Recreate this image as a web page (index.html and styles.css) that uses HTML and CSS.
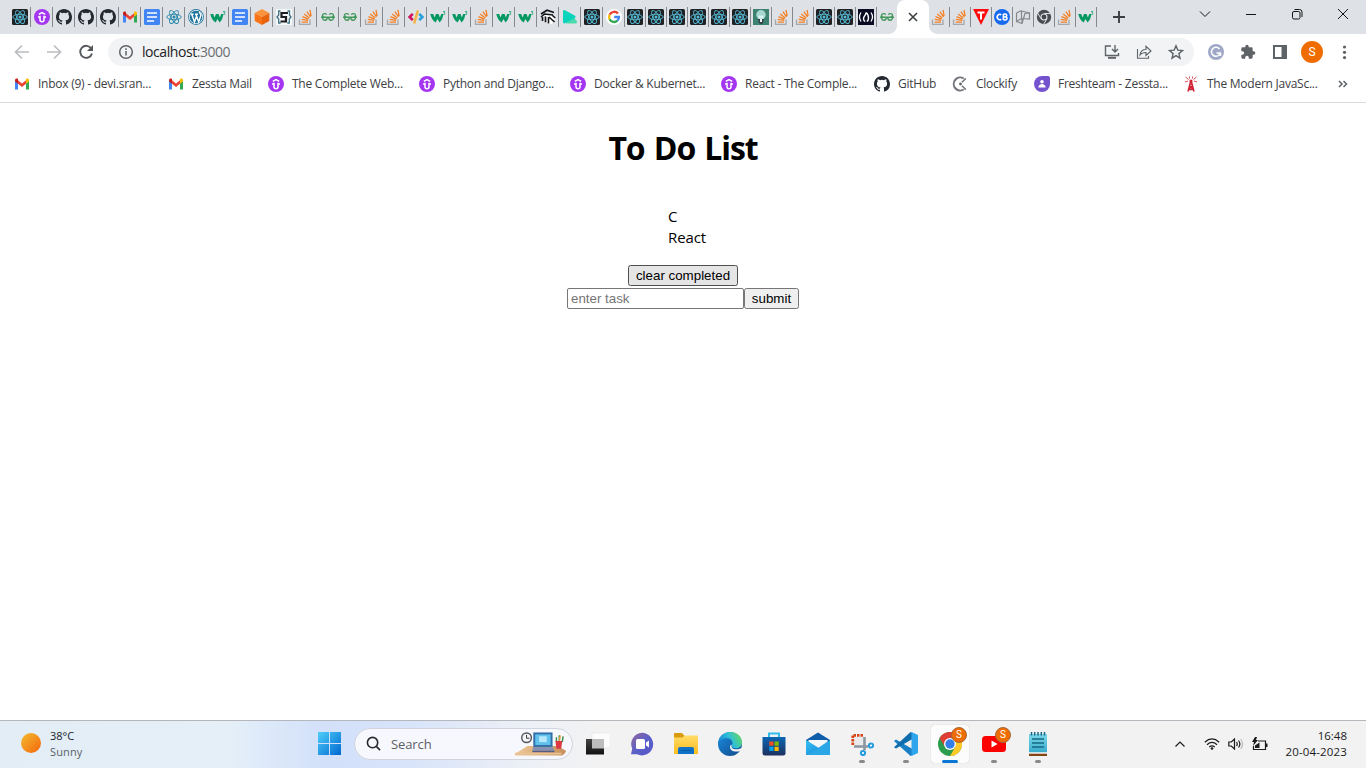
FILE: index.html
```html
<!DOCTYPE html>
<html lang="en">
<head>
<meta charset="utf-8">
<title>To Do List</title>
<link rel="stylesheet" href="styles.css">
</head>
<body>
<svg class="sprite" aria-hidden="true">
  <defs>
    <linearGradient id="gSun" x1="0" y1="0" x2="1" y2="1"><stop offset="0" stop-color="#f2bd30"/><stop offset="1" stop-color="#f4650c"/></linearGradient>
    <linearGradient id="gWin" x1="0" y1="0" x2="1" y2="1"><stop offset="0" stop-color="#4fcffa"/><stop offset="1" stop-color="#0067d0"/></linearGradient>
    <linearGradient id="gChat" x1="0" y1="0" x2="1" y2="1"><stop offset="0" stop-color="#98699c"/><stop offset=".5" stop-color="#5b5fc7"/><stop offset="1" stop-color="#5658c9"/></linearGradient>
    <linearGradient id="gFold" x1="0" y1="0" x2="0" y2="1"><stop offset="0" stop-color="#ffdc68"/><stop offset="1" stop-color="#fcbc1e"/></linearGradient>
    <linearGradient id="gEdge" x1="0" y1=".6" x2="1" y2=".2"><stop offset="0" stop-color="#1683d8"/><stop offset=".5" stop-color="#2fc0d8"/><stop offset="1" stop-color="#67d95a"/></linearGradient>
    <linearGradient id="gEdge2" x1="0" y1="0" x2="1" y2="1"><stop offset="0" stop-color="#1b8de0"/><stop offset="1" stop-color="#114a8b"/></linearGradient>
    <linearGradient id="gStore" x1="0" y1="0" x2="0" y2="1"><stop offset="0" stop-color="#0c66b4"/><stop offset="1" stop-color="#1c2f5e"/></linearGradient>
    <linearGradient id="gMail" x1="0" y1="0" x2="1" y2="1"><stop offset="0" stop-color="#35c1f1"/><stop offset="1" stop-color="#1380d8"/></linearGradient>
    <linearGradient id="gDark" x1="0" y1="0" x2="0" y2="1"><stop offset="0" stop-color="#444"/><stop offset="1" stop-color="#111"/></linearGradient>
    <linearGradient id="gNote" x1="0" y1="0" x2="0" y2="1"><stop offset="0" stop-color="#7ad9e8"/><stop offset="1" stop-color="#36aacb"/></linearGradient>
    <linearGradient id="gDesk" x1="0" y1="0" x2="1" y2="0"><stop offset="0" stop-color="#eec898"/><stop offset="1" stop-color="#c8905c"/></linearGradient>
  </defs>
  <symbol id="atom" viewBox="0 0 16 16"><g fill="none" stroke="currentColor" stroke-width=".9"><ellipse cx="8" cy="8" rx="7.200" ry="2.800"/><ellipse cx="8" cy="8" rx="7.200" ry="2.800" transform="rotate(60 8 8)"/><ellipse cx="8" cy="8" rx="7.200" ry="2.800" transform="rotate(120 8 8)"/></g><circle cx="8" cy="8" r="1.500" fill="currentColor"/></symbol>
  <symbol id="react" viewBox="0 0 16 16"><rect width="16" height="16" rx="1.500" fill="#202124"/><use href="#atom" color="#55bdd8"/></symbol>
  <symbol id="udemy" viewBox="0 0 16 16"><circle cx="8" cy="8" r="8" fill="#a435f0"/><path d="M4.800 5.400 8 3.500l3.200 1.900M6 6.800v4a2 2 0 0 0 4 0v-4M4 8h2M10 8h2" fill="none" stroke="#fff" stroke-width="1.500"/></symbol>
  <symbol id="github" viewBox="0 0 16 16"><path fill="#24292f" d="M8 0C3.580 0 0 3.580 0 8c0 3.540 2.290 6.530 5.470 7.590.4.070.55-.17.55-.38 0-.19-.01-.82-.01-1.490-2.010.370-2.530-.49-2.690-.94-.09-.23-.48-.94-.82-1.130-.28-.15-.68-.52-.01-.53.63-.01 1.080.580 1.230.820.720 1.210 1.870.870 2.330.660.070-.52.280-.87.510-1.070-1.780-.2-3.640-.89-3.640-3.950 0-.87.310-1.590.820-2.150-.08-.2-.36-1.020.080-2.120 0 0 .67-.21 2.200.820a7.700 7.700 0 0 1 4 0c1.530-1.040 2.200-.82 2.200-.82.440 1.100.160 1.920.080 2.120.510.560.820 1.270.820 2.150 0 3.070-1.870 3.750-3.650 3.950.290.250.540.730.540 1.480 0 1.070-.01 1.930-.01 2.200 0 .21.150.460.550.380A8 8 0 0 0 16 8c0-4.420-3.580-8-8-8z"/></symbol>
  <symbol id="gmail" viewBox="0 0 16 16"><path fill="#4285f4" d="M1 4v9.500h3V7z"/><path fill="#34a853" d="M12 7v6.500h3V4z"/><path fill="#ea4335" d="M4 4.200 8 7.400l4-3.200v3.500l-4 3.200-4-3.200z"/><path fill="#c5221f" d="M1 4.300C1 2.700 2.800 2 4 3v4.800L1 5.600z"/><path fill="#fbbc04" d="M15 4.300c0-1.600-1.800-2.300-3-1.300v4.800l3-2.200z"/></symbol>
  <symbol id="docs" viewBox="0 0 16 16"><rect width="16" height="16" rx="1.500" fill="#4285f4"/><path d="M3 4h10M3 8h10M3 12h7" stroke="#fff" stroke-width="1.700"/></symbol>
  <symbol id="wp" viewBox="0 0 16 16"><circle cx="8" cy="8" r="7.900" fill="#21759b"/><circle cx="8" cy="8" r="6.700" fill="none" stroke="#fff" stroke-width=".8"/><path d="M2.600 5.200h3M7 5.200h3M3.800 5.400l2.700 7.500L8.600 7M8 5.400l2.700 7.500L13 6c0-1.200-1.600-1.500-1.600-3" fill="none" stroke="#fff" stroke-width="1.400"/></symbol>
  <symbol id="w3" viewBox="0 0 16 16"><path fill="#059862" d="M.3 5h2.900l1.300 3.600L6 5h2.600l1.300 3.600L11.200 5h1.900c.1 3-1.300 6.800-3.600 8.400L7.500 10l-1.800 3.400C2.800 12 1 8.500.3 5z"/><path d="M13 2.600h2l-1.100 1.500c1.500 0 1.300 2.200-.9 1.500" fill="none" stroke="#29a878" stroke-width=".9"/></symbol>
  <symbol id="cube" viewBox="0 0 16 16"><path fill="#fb923c" d="m8 0 7.300 4L8 8 .7 4z"/><path fill="#f97316" d="M.7 4 8 8v8l-7.300-4z"/><path fill="#e7640a" d="M15.300 4 8 8v8l7.300-4z"/></symbol>
  <symbol id="sj" viewBox="0 0 16 16"><rect width="16" height="16" fill="#f5f6f6"/><path d="M4.500 2H2.700v4L1 8l1.700 2v4h2M11.500 2h2v4L15 8l-1.700 2v4h-2" fill="none" stroke="#3c7184" stroke-width="1.300"/><path d="M12 4H5.500v4H10v4.500H4.500" fill="none" stroke="#1c1d20" stroke-width="2.200"/></symbol>
  <symbol id="so" viewBox="0 0 16 16"><path d="M1.500 10.500v5h10.500v-5" fill="none" stroke="#a5a7aa" stroke-width="1.300"/><path d="M3.600 13.200h6.400M3.800 10.400l6.400 1M4.500 7.700l6 2.500M6.200 4.900l5 4M8.900 2.700l3.600 5.200M12 .8l1.100 6.400" stroke="#f48024" stroke-width="1.300"/></symbol>
  <symbol id="gfg" viewBox="0 0 16 16"><path d="M1 8.300h14M6.800 5.600C5.300 3.900 2.700 4.500 2.500 6.300c-.1 1.200.9 1.800 2 2M2.500 8.300c0 4.200 4.800 3.800 4.800 0M9.200 5.600c1.500-1.700 4.100-1.100 4.300.7.100 1.200-.9 1.800-2 2M13.500 8.300c0 4.200-4.800 3.800-4.800 0" fill="none" stroke="#43985b" stroke-width="1.400"/></symbol>
  <symbol id="code" viewBox="0 0 16 16"><path d="M4.800 4.800 1.600 8l3.200 3.200" fill="none" stroke="#d0115e" stroke-width="2.600"/><path d="M11.200 4.800 14.400 8l-3.200 3.200" fill="none" stroke="#269fdb" stroke-width="2.600"/><path d="m9.800 1.500-3.600 13" stroke="#f5b546" stroke-width="2.600"/></symbol>
  <symbol id="hex" viewBox="0 0 16 16"><path fill="#fff" d="m5 6 7-1 3.500 4-3.500 6H8z"/><path d="M1 5 7 1.200l7 2.300M1 8l3.500-3L13 6M2.500 8v4M5.500 7.500v5.700M8.500 8v6.500M9 8l5.500 5M12.500 6.500 15.300 9" fill="none" stroke="#141518" stroke-width="1.600"/></symbol>
  <symbol id="play" viewBox="0 0 16 16"><path fill="#4bdcae" d="m8 5 6.500 6.500q1.500 2.500-1 3H4z"/><path fill="#08d3bb" d="M1 2.500Q1 .4 3 1.300l9.600 5.300q2 1.400 0 2.600L3 14.300q-2 .6-2-1.300z"/></symbol>
  <symbol id="google" viewBox="0 0 16 16"><circle cx="8" cy="8" r="8" fill="#fff"/><g fill="none" stroke-width="2.300"><path stroke="#ea4335" d="M12 4.500A5 5 0 0 0 3.600 5.800"/><path stroke="#fbbc05" d="M3.600 5.800a5 5 0 0 0 0 4.400"/><path stroke="#34a853" d="M3.600 10.200a5 5 0 0 0 7.800 1.500"/><path stroke="#4285f4" d="M11.400 11.700A5 5 0 0 0 13 8H8.200"/></g></symbol>
  <symbol id="bulb" viewBox="0 0 16 16"><rect width="16" height="16" fill="#3d8270"/><path fill="#a5d6d0" d="M3.200 5.800a4.800 4.800 0 0 1 9.600 0c0 2.500-1.800 3-2.300 4.700h-5C5 8.800 3.200 8.300 3.200 5.800z"/><path fill="#d9f3ee" d="M5.500 6.500h5v3h-5z"/><path fill="#33424a" d="M5 10h6l-1 4-2 1.500L6 14z"/><path fill="#f1f5f3" d="M7 10h2v3H7z"/></symbol>
  <symbol id="fcc" viewBox="0 0 16 16"><rect width="16" height="16" fill="#0a0a23"/><path d="M3 3.500Q0 8 3 12.500M13 3.500q3 4.500 0 9" fill="none" stroke="#fff" stroke-width="1.300"/><path d="M8 3.500c.2 2.500-2.500 3.500-2.500 6 0 1.500.8 2.500 1.700 3M8 3.500c1.500 1 2.500 3.500 2.500 5.500s-.8 3-1.700 3.500" fill="none" stroke="#fff" stroke-width="1.400"/></symbol>
  <symbol id="tri" viewBox="0 0 16 16"><path fill="#fa0a0a" d="M0 0h16L8 16z"/><path d="M4.500 3.500h7M8 3.500v7" stroke="#fff" stroke-width="2"/></symbol>
  <symbol id="cb" viewBox="0 0 16 16"><circle cx="8" cy="8" r="8" fill="#1769f0"/><path d="M7.300 5.700A2.700 2.700 0 1 0 7.300 10.300M9.400 5v6M9.400 5h1.700c2.200 0 2.200 3-.1 3H9.400h2c2.400 0 2 3-.3 3H9.400" fill="none" stroke="#fff" stroke-width="1.600"/></symbol>
  <symbol id="wire" viewBox="0 0 16 16"><path d="M6.500 1.500v8M6.500 2 14.500 4v6L7 9.500M1.500 4l5-2.500M1.500 4v8.500l5-3M1.500 12.500 7 14.500l3-10 4.500-.5M7 14.500v-5" fill="none" stroke="#85888b" stroke-width="1.200"/></symbol>
  <symbol id="chromeGrey" viewBox="0 0 16 16"><circle cx="8" cy="8" r="7.200" fill="#4b4d50"/><path d="M8 4.500h6.500M5 9.700 1.800 4.200M11 9.700 7.800 15" stroke="#dee1e6" stroke-width="1"/><circle cx="8" cy="8" r="3.500" fill="#dee1e6"/><circle cx="8" cy="8" r="2.400" fill="#44474a"/></symbol>
  <symbol id="clock" viewBox="0 0 16 16"><path d="M11.700 2.500A6.500 6.500 0 1 0 11.700 13.500" fill="none" stroke="#72767a" stroke-width="2"/><path d="m10 6.200 3.800-3.800M10 9.800l3.800 3.800" stroke="#72767a" stroke-width="1.500"/><circle cx="8.500" cy="8" r="1.400" fill="#606569"/></symbol>
  <symbol id="fresh" viewBox="0 0 16 16"><path fill="#7553ce" d="M8 0h6q2 0 2 2v6a8 8 0 1 1-8-8z"/><circle cx="8" cy="5.700" r="1.800" fill="#fff"/><path fill="#fff" d="M4.400 11.500c0-4.800 7.200-4.800 7.200 0z"/></symbol>
  <symbol id="tower" viewBox="0 0 16 16"><path d="M7.500 6 5 15.500M8.500 6 11 15.500M6.500 8h3M5.600 13.500h4.800M6 13l4-4M10 13 6 9" stroke="#cf2436" stroke-width="1.500"/><circle cx="8" cy="5" r="1.600" fill="#cf2436"/><path d="M2.500 1 5.500 3.500M2 6l3-1M13.500 1l-3 2.500M14 6l-3-1M6.500.5v2M9.500.5v2" stroke="#e04e5b" stroke-width="1"/></symbol>
</svg>

<header class="browser">
  <div class="tabstrip">
    <div class="tabs">
      <span class="tab"><svg><use href="#react"/></svg></span>
      <span class="tab"><svg><use href="#udemy"/></svg></span>
      <span class="tab"><svg><use href="#github"/></svg></span>
      <span class="tab"><svg><use href="#github"/></svg></span>
      <span class="tab"><svg><use href="#github"/></svg></span>
      <span class="tab"><svg><use href="#gmail"/></svg></span>
      <span class="tab"><svg><use href="#docs"/></svg></span>
      <span class="tab atom-blue"><svg><use href="#atom"/></svg></span>
      <span class="tab"><svg><use href="#wp"/></svg></span>
      <span class="tab"><svg><use href="#w3"/></svg></span>
      <span class="tab"><svg><use href="#docs"/></svg></span>
      <span class="tab"><svg><use href="#cube"/></svg></span>
      <span class="tab"><svg><use href="#sj"/></svg></span>
      <span class="tab"><svg><use href="#so"/></svg></span>
      <span class="tab"><svg><use href="#gfg"/></svg></span>
      <span class="tab"><svg><use href="#gfg"/></svg></span>
      <span class="tab"><svg><use href="#so"/></svg></span>
      <span class="tab"><svg><use href="#so"/></svg></span>
      <span class="tab"><svg><use href="#code"/></svg></span>
      <span class="tab"><svg><use href="#w3"/></svg></span>
      <span class="tab"><svg><use href="#w3"/></svg></span>
      <span class="tab"><svg><use href="#so"/></svg></span>
      <span class="tab"><svg><use href="#w3"/></svg></span>
      <span class="tab"><svg><use href="#w3"/></svg></span>
      <span class="tab"><svg><use href="#hex"/></svg></span>
      <span class="tab"><svg><use href="#play"/></svg></span>
      <span class="tab"><svg><use href="#react"/></svg></span>
      <span class="tab"><svg><use href="#google"/></svg></span>
      <span class="tab narrow"><svg><use href="#react"/></svg></span>
      <span class="tab narrow"><svg><use href="#react"/></svg></span>
      <span class="tab narrow"><svg><use href="#react"/></svg></span>
      <span class="tab narrow"><svg><use href="#react"/></svg></span>
      <span class="tab narrow"><svg><use href="#react"/></svg></span>
      <span class="tab narrow"><svg><use href="#react"/></svg></span>
      <span class="tab narrow"><svg><use href="#bulb"/></svg></span>
      <span class="tab narrow"><svg><use href="#so"/></svg></span>
      <span class="tab narrow"><svg><use href="#so"/></svg></span>
      <span class="tab narrow"><svg><use href="#react"/></svg></span>
      <span class="tab narrow"><svg><use href="#react"/></svg></span>
      <span class="tab narrow"><svg><use href="#fcc"/></svg></span>
      <span class="tab narrow before-active"><svg><use href="#gfg"/></svg></span>
      <span class="active-tab"><svg class="close" viewBox="0 0 10 10"><path d="m1 1 8 8M9 1 1 9"/></svg></span>
      <span class="tab narrow"><svg><use href="#so"/></svg></span>
      <span class="tab narrow"><svg><use href="#so"/></svg></span>
      <span class="tab narrow"><svg><use href="#tri"/></svg></span>
      <span class="tab narrow"><svg><use href="#cb"/></svg></span>
      <span class="tab narrow"><svg><use href="#wire"/></svg></span>
      <span class="tab narrow"><svg><use href="#chromeGrey"/></svg></span>
      <span class="tab narrow"><svg><use href="#so"/></svg></span>
      <span class="tab narrow"><svg><use href="#w3"/></svg></span>
    </div>
    <svg class="newtab" viewBox="0 0 12 12"><path d="M6 0v12M0 6h12"/></svg>
    <div class="winctl">
      <svg viewBox="0 0 12 12"><path d="m1 3.500 5 5 5-5"/></svg>
      <svg viewBox="0 0 12 12"><path d="M1 6.500h10"/></svg>
      <svg viewBox="0 0 12 12"><rect x="1.500" y="3.500" width="7.500" height="7.500" rx="1.500"/><path d="M3.500 1.500h5q2.500 0 2.500 2.500v5"/></svg>
      <svg viewBox="0 0 12 12"><path d="m1 1 10 10M11 1 1 11"/></svg>
    </div>
  </div>

  <div class="toolbar">
    <div class="nav">
      <svg class="off" viewBox="0 0 16 16"><path d="M15 8H2M8 1.500 1.500 8 8 14.500"/></svg>
      <svg class="off" viewBox="0 0 16 16"><path d="M1 8h13M8 1.500 14.500 8 8 14.500"/></svg>
      <svg viewBox="0 0 16 16"><path d="M13.300 4.600A6 6 0 1 0 14 9.500"/><path class="solid" d="M15 1v6H9z"/></svg>
    </div>
    <div class="omnibox">
      <svg class="info" viewBox="0 0 16 16"><circle cx="8" cy="8" r="6.300"/><path d="M8 7v4.500M8 4.300v1.700"/></svg>
      <span class="url">localhost<span class="port">:3000</span></span>
      <div class="omni-actions">
        <svg viewBox="0 0 16 16"><path d="M7 2H1.500v9.500h13V9M11 1v6.500M8 5l3 3 3-3"/><path d="M4 13.800h8" stroke-width="2"/></svg>
        <svg viewBox="0 0 16 16" class="thin"><path d="M1.500 5v9.300h11V12M4 11c.5-4 3-5.500 6-5.500V2.300L15 7l-5 4.500V8.500C7.500 8.500 5.500 9 4 11z"/></svg>
        <svg viewBox="0 0 16 16"><path d="m8 1.800 1.800 4.300 4.700.4-3.600 3.100 1.100 4.600-4-2.500-4 2.500 1.100-4.600L1.500 6.500l4.700-.4z"/></svg>
      </div>
    </div>
    <div class="ext">
      <svg viewBox="0 0 16 16"><circle cx="8" cy="8" r="8" fill="#9fa8c6"/><path d="M11.500 5A4.500 4.500 0 1 0 12.300 9H8.500M12.500 9v3" fill="none" stroke="#fff" stroke-width="1.500"/></svg>
      <svg viewBox="0 0 24 24"><path fill="#5f6368" d="M20.500 11H19V7a2 2 0 0 0-2-2h-4V3.500a2.500 2.500 0 0 0-5 0V5H4a2 2 0 0 0-2 2v3.800h1.500a2.700 2.700 0 0 1 0 5.400H2V20c0 1.100.9 2 2 2h3.800v-1.500a2.700 2.700 0 0 1 5.400 0V22H17a2 2 0 0 0 2-2v-4h1.500a2.500 2.500 0 0 0 0-5z"/></svg>
      <svg viewBox="0 0 16 16"><path d="M2 2h12v12H2z" fill="#fff" stroke="#5f6368" stroke-width="2"/><path d="M9.500 2H14v12H9.500z" fill="#5f6368"/></svg>
      <span class="avatar">S</span>
      <svg viewBox="0 0 16 16" fill="#5f6368"><circle cx="8.500" cy="3" r="1.600"/><circle cx="8.500" cy="8.300" r="1.600"/><circle cx="8.500" cy="13.600" r="1.600"/></svg>
    </div>
  </div>

  <nav class="bookmarks">
    <a class="bm w154"><svg><use href="#gmail"/></svg><span class="lbl">Inbox (9) - devi.sran...</span></a>
    <a class="bm w100"><svg><use href="#gmail"/></svg><span class="lbl">Zessta Mail</span></a>
    <a class="bm w151"><svg><use href="#udemy"/></svg><span class="lbl">The Complete Web...</span></a>
    <a class="bm w151"><svg><use href="#udemy"/></svg><span class="lbl">Python and Django...</span></a>
    <a class="bm w151"><svg><use href="#udemy"/></svg><span class="lbl">Docker &amp; Kubernet...</span></a>
    <a class="bm w153"><svg><use href="#udemy"/></svg><span class="lbl">React - The Comple...</span></a>
    <a class="bm w78"><svg><use href="#github"/></svg><span class="lbl">GitHub</span></a>
    <a class="bm w82"><svg><use href="#clock"/></svg><span class="lbl">Clockify</span></a>
    <a class="bm w149"><svg><use href="#fresh"/></svg><span class="lbl">Freshteam - Zessta...</span></a>
    <a class="bm w154"><svg><use href="#tower"/></svg><span class="lbl">The Modern JavaSc...</span></a>
    <svg class="more" viewBox="0 0 10 8"><path d="m1 1 3 3-3 3M5.500 1l3 3-3 3"/></svg>
  </nav>
</header>

<main class="app">
  <h1 class="title">To Do List</h1>
  <div class="todos">
    <div class="todo">C</div>
    <div class="todo">React</div>
  </div>
  <button class="btn clear">clear completed</button>
  <div class="entry">
    <input class="field" type="text" placeholder="enter task">
    <button class="btn submit">submit</button>
  </div>
</main>

<footer class="taskbar">
  <div class="weather">
    <svg class="sun" viewBox="0 0 20 20"><circle cx="10" cy="10" r="10" fill="url(#gSun)"/></svg>
    <div class="weather-text"><span class="temp">38°C</span><span class="cond">Sunny</span></div>
  </div>
  <svg class="start" viewBox="0 0 24 24"><path fill="url(#gWin)" d="M0 0h11.500v11.500H0zM12.500 0H24v11.500H12.500zM0 12.500h11.500V24H0zM12.500 12.500H24V24H12.500z"/></svg>
  <div class="search">
    <svg class="glass" viewBox="0 0 16 16"><circle cx="7" cy="7" r="5.500"/><path d="m11 11 4 4"/></svg>
    <span class="search-label">Search</span>
    <svg class="desk" viewBox="0 0 54 26">
      <path fill="url(#gDesk)" d="M0 23 13 15h31l9 5q0 2-4 5H0z"/>
      <path fill="#e9c192" d="M0 22h48v2H0z"/>
      <circle cx="12" cy="6.500" r="5" fill="#f5f5f7" stroke="#53555c" stroke-width="1.500"/><path d="M12 3.500v3.500h3" fill="none" stroke="#333" stroke-width="1"/>
      <path fill="#326fa8" d="M19 1h20v15H19z"/><path fill="#61c2ee" d="M21 3h16v11H21z"/><path fill="#b7e8fb" d="M25 5h8v6h-8z"/>
      <path fill="#8991b1" d="M19 16h20l2 4H18z"/><path fill="#525c86" d="M18 20h23v1.500H18z"/>
      <path d="M43 11V6M46 11V4M49 11l1-6" stroke="#3f8850" stroke-width="1.500"/><path d="m46 10 1-6" stroke="#e4a033" stroke-width="1.500"/><path fill="#dc3945" d="M42 10h7l-1 8h-5z"/>
    </svg>
  </div>
  <div class="apps">
    <span class="app-icon"><svg viewBox="0 0 24 24"><path fill="#fcfcfc" stroke="#d8d8d8" stroke-width=".4" d="M6 1h18v15H6z"/><path fill="url(#gDark)" d="M0 7h18v15.500H0z"/><path fill="#bcbcbc" d="M6 7h12v9.500H6z"/></svg></span>
    <span class="app-icon"><svg viewBox="0 0 24 24"><path fill="url(#gChat)" d="M12 .8a11.300 11.300 0 1 1-5 21.500H1l1.200-5.500A11.300 11.300 0 0 1 12 .8z"/><rect x="6" y="7" width="9" height="10" rx="1.500" fill="#fff"/><path fill="#fff" d="m16 10.500 3-2v7l-3-2z"/></svg></span>
    <span class="app-icon"><svg viewBox="0 0 24 24"><path fill="#d99b0b" d="M0 2q0-1 1-1h7l2.500 3v3H0z"/><path fill="url(#gFold)" d="M0 5.500h8.500l2-2H24v18.500H0z"/><path fill="#0e72c8" d="M4 22v-5q0-2 2-2h12q2 0 2 2v5z"/><path d="M7 18.500h10" stroke="#075ca4" stroke-width="1"/></svg></span>
    <span class="app-icon"><svg viewBox="0 0 24 24"><circle cx="12" cy="12" r="12" fill="url(#gEdge2)"/><path fill="url(#gEdge)" d="M.2 11C1 4.500 6 0 12.300 0 19 0 24 4.800 24 10.300c0 4-2.900 6-6 6-3 0-4.600-1.500-4.600-2.300 0-.6 1.100-1.100 1.100-3C14.500 8.300 12 6.300 8.800 6.300 5.400 6.300 1.800 8 .2 11z"/><path fill="#f2f2f2" d="M13.500 13.700c-.7 1.600 1.500 3.600 4.800 3.600 2 0 3.800-.5 5-1.300l.7 1-2 2c-4.500 1.400-10 .2-10-4 0-1 .4-1.900 1.300-2.600z"/></svg></span>
    <span class="app-icon"><svg viewBox="0 0 24 24"><path d="M7 6V1.500h10V6" fill="none" stroke="#31bce9" stroke-width="2"/><path fill="url(#gStore)" d="M.5 5h23v16q0 2.500-2.500 2.500H3Q.5 23.500.5 21z"/><path fill="#f25022" d="M7.300 9.500h4.200v4.200H7.300z"/><path fill="#7fba00" d="M12.500 9.500h4.200v4.200h-4.200z"/><path fill="#00a4ef" d="M7.300 14.700h4.200v4.200H7.300z"/><path fill="#ffb900" d="M12.500 14.700h4.200v4.200h-4.200z"/></svg></span>
    <span class="app-icon"><svg viewBox="0 0 24 24"><path fill="#0f5eaa" d="M0 8 12 .5 24 8v5H0z"/><path fill="#f4f6f7" d="M2.500 8h19v2L12 17 2.500 10z"/><path fill="url(#gMail)" d="m0 8 24 15H0z"/><path fill="#2ba7e8" d="M24 8v15H1.500z"/></svg></span>
    <span class="app-icon running"><svg viewBox="0 0 24 24"><path d="M5 5h9v9H5z" fill="#e8eaec"/><path d="M13 3.300H2.800V13" fill="none" stroke="#d64517" stroke-width="2.800" stroke-dasharray="2.500 1"/><path d="M14.500 5v13M4 14.500h14" fill="none" stroke="#8d979f" stroke-width="2.600"/><circle cx="21" cy="13.500" r="2.100" fill="#fff" stroke="#259bdc" stroke-width="2"/><circle cx="13" cy="21" r="2.100" fill="#fff" stroke="#259bdc" stroke-width="2"/></svg></span>
    <span class="app-icon running"><svg viewBox="0 0 24 24"><path fill="#187fc5" d="M2 7.500 0 9l16.500 15 2-1V17z"/><path fill="#0f6dad" d="m2 16.500-2-1.300L16.500 0l2 1v6z"/><path fill="#2fa5ed" d="m17.500 0 6.500 3v18l-6.500 3z"/></svg></span>
    <span class="app-icon current"><svg viewBox="0 0 24 24"><circle cx="12" cy="12" r="12" fill="#2c9c4d"/><path fill="#df4036" d="M1.600 6A12 12 0 0 1 22.400 6H12L7 15z"/><path fill="#ffca28" d="M22.400 6A12 12 0 0 1 12 24l5.200-9L15 6z"/><circle cx="12" cy="12" r="6" fill="#fff"/><circle cx="12" cy="12" r="4.700" fill="#347ee9"/></svg><span class="badge">S</span></span>
    <span class="app-icon running"><svg viewBox="0 0 24 24"><rect y="4" width="24" height="16" rx="3.500" fill="#f00"/><path fill="#fff" d="M9.500 8.500v7l6-3.500z"/></svg><span class="badge">S</span></span>
    <span class="app-icon running"><svg viewBox="0 0 24 24"><path fill="url(#gNote)" d="M3 2h18v18.500H3z"/><path d="M5.500 0v3.500M8.700 0v3.500M12 0v3.500M15.300 0v3.500M18.500 0v3.500" stroke="#1c668a" stroke-width="1.500"/><path d="M6 7h12M6 11h12M6 15h12" stroke="#176887" stroke-width="1.700"/><path fill="#fff" d="M3 20.500h18v1.200H3z"/><path fill="#834516" d="M3 21.700h18V24H3z"/></svg></span>
  </div>
  <div class="tray">
    <svg class="chev" viewBox="0 0 10 6"><path d="m.5 5.500 4.500-4.500 4.500 4.500"/></svg>
    <svg class="wifi" viewBox="0 0 16 12"><path d="M.8 4.200q7.200-6.500 14.400 0M3 6.700q5-4.500 10 0M5.300 9q2.700-2.400 5.400 0"/><circle cx="8" cy="10.500" r="1.300" fill="#1b1b1b" stroke="none"/></svg>
    <svg class="vol" viewBox="0 0 16 12"><path d="M.8 4h2.500L6.500 1v10L3.300 8H.8zM8.500 4q1.500 2 0 4M10.500 2.500q2.800 3.500 0 7"/><path d="M12.700 1q3.700 5 0 10" stroke="#bbb"/></svg>
    <svg class="bat" viewBox="0 0 17 14"><path d="M6 4h7.500v8.500H1.500V9"/><path d="M14.500 6.500v3.500" stroke-width="2"/><path fill="#1b1b1b" stroke="none" d="M3 0 0 5h2L1 9l5-6H4l1-3zM3 11V8.500L7.500 5.500V11z"/></svg>
    <div class="clock"><span class="tm">16:48</span><span class="dt">20-04-2023</span></div>
  </div>
</footer>
</body>
</html>
```
FILE: styles.css
```css
* { box-sizing: border-box; }
body {
  margin: 0;
  width: 1366px;
  height: 768px;
  overflow: hidden;
  display: flex;
  flex-direction: column;
  background: #fff;
  font-family: "Open Sans", "Noto Sans", sans-serif;
  color: #000;
}
svg { display: block; flex: none; }
.sprite { position: absolute; width: 0; height: 0; }

/* Browser chrome */
.browser { height: 103px; border-bottom: 1px solid #d9dbdd; }
.tabstrip { height: 34px; background: #dee1e6; display: flex; padding-left: 9px; }
.tabs { display: flex; }
.tab {
  width: 22px; height: 20px; margin-top: 7px; padding: 2px 0 0 3px;
  border-right: 1px solid #85888c;
}
.tab svg, .bm svg { width: 16px; height: 16px; }
.tab.narrow { width: 21px; padding-left: 2px; }
.tab.before-active { width: 20px; border-right: 0; }
.atom-blue { color: #2285a8; }
.active-tab {
  position: relative; width: 32px; height: 34px; background: #fff;
  border-radius: 8px 8px 0 0; display: flex; align-items: center; justify-content: center;
}
.active-tab::before, .active-tab::after {
  content: ""; position: absolute; bottom: 0; width: 8px; height: 8px;
}
.active-tab::before { left: -8px; background: radial-gradient(circle at 0 0, transparent 7.5px, #fff 8px); }
.active-tab::after { right: -8px; background: radial-gradient(circle at 100% 0, transparent 7.5px, #fff 8px); }
.close { width: 10px; height: 10px; fill: none; stroke: #3c4043; stroke-width: 1.6; }
.newtab { width: 12px; height: 12px; margin: 11px 0 0 16px; stroke: #3c4043; stroke-width: 1.9; }
.winctl { display: flex; gap: 34px; margin: 8px 17px 0 auto; }
.winctl svg { width: 12px; height: 12px; fill: none; stroke: #151515; stroke-width: 1; }

.toolbar { height: 34px; padding: 4px 0 2px; display: flex; }
.nav { width: 108px; padding: 6px 0 0 14px; display: flex; gap: 16px; }
.nav svg { width: 16px; height: 16px; fill: none; stroke: #54575b; stroke-width: 1.9; }
.nav .off { stroke: #bbbdc0; stroke-width: 1.7; }
.nav .solid { fill: #54575b; stroke: none; }
.omnibox {
  width: 1086px; height: 28px; border-radius: 14px; background: #f1f3f4;
  display: flex; align-items: center; padding: 0 10px;
}
.info { width: 16px; height: 16px; fill: none; stroke: #5f6368; stroke-width: 1.5; }
.url { margin-left: 8px; font-size: 14px; line-height: 20px; letter-spacing: -.44px; color: #202124; }
.port { color: #6b6f73; }
.omni-actions { display: flex; gap: 16px; margin-left: auto; }
.omni-actions svg { width: 16px; height: 16px; fill: none; stroke: #5f6368; stroke-width: 1.4; }
.omni-actions .thin { stroke-width: 1.1; }
.ext { display: flex; align-items: center; gap: 16px; padding-left: 14px; height: 28px; }
.ext svg { width: 16px; height: 16px; }
.avatar {
  width: 22px; height: 22px; margin: 0 -3px; border-radius: 50%; background: #ef6c00; color: #fff;
  font: 12px/22px Roboto, sans-serif; text-align: center;
}

.bookmarks { display: flex; align-items: center; height: 32px; padding-left: 14px; }
.bm { display: flex; align-items: center; gap: 8px; height: 16px; }
.lbl { font-size: 12px; line-height: 16px; letter-spacing: -.25px; color: #3c4043; white-space: nowrap; }
.w154 { width: 154px; }
.w153 { width: 153px; }
.w151 { width: 151px; }
.w149 { width: 149px; }
.w100 { width: 100px; }
.w82 { width: 82px; }
.w78 { width: 78px; }
.more { width: 10px; height: 8px; margin-left: 1px; fill: none; stroke: #5f6368; stroke-width: 1.5; }

/* Page */
.app { flex: 1; display: flex; flex-direction: column; align-items: center; }
.title {
  margin: 24px 0 37px; font-size: 32px; line-height: 42px; font-weight: 700;
  letter-spacing: -1.1px; word-spacing: 2px; white-space: nowrap;
}
.todos { width: 30px; margin: 0 0 17px; font-size: 15px; line-height: 21px; }
.todo { white-space: nowrap; letter-spacing: -.1px; }
.btn, .field { font: 13.333px "Liberation Sans", Arial, sans-serif; height: 21px; }
.btn { border: 1px solid #767676; border-radius: 2.5px; background: #efefef; color: #000; padding: 0; }
.clear { width: 110px; background: #e5e5e5; border-color: #4f4f4f; }
.entry { display: flex; margin-top: 2px; }
.field { width: 177px; border: 1px solid #767676; border-radius: 2px; padding: 1px 3px; }
.field::placeholder { color: #757575; }
.submit { width: 55px; }

/* Taskbar */
.taskbar {
  height: 48px; padding-bottom: 2px; border-top: 1px solid #b4b8bd; display: flex; align-items: center;
  background: linear-gradient(90deg, #e2edf6 0, #e4eff8 230px, #d2e0fa 325px, #d8e4fa 410px, #edf0f6 530px, #f2f2f2 600px);
}
.weather { width: 318px; padding-left: 21px; display: flex; align-items: center; gap: 9px; }
.sun { width: 20px; height: 20px; margin-top: -1px; }
.weather-text { display: flex; flex-direction: column; font-size: 11px; line-height: 16px; }
.temp { color: #202428; }
.cond { color: #5c6268; letter-spacing: .15px; }
.start { width: 23px; height: 23px; }
.search {
  width: 219px; height: 32px; margin-left: 13px; padding: 0 5px 0 11px; border-radius: 16px;
  border: 1px solid #cfd4dd; background: #f6f8fd; display: flex; align-items: center;
}
.glass { width: 15px; height: 15px; fill: none; stroke: #26282b; stroke-width: 1.7; }
.search-label { margin-left: 10px; font-size: 13px; color: #5d6065; letter-spacing: -.1px; }
.desk { width: 52px; height: 26px; margin-left: auto; }
.apps { display: flex; gap: 6px; margin-left: 6px; }
.app-icon { position: relative; width: 38px; height: 38px; display: flex; align-items: center; justify-content: center; border-radius: 4px; }
.app-icon > svg { width: 24px; height: 24px; }
.current { background: #fcfcfc; box-shadow: 0 0 1px #bbb; }
.running::after, .current::after {
  content: ""; position: absolute; left: 16px; bottom: 0; width: 6px; height: 3px; border-radius: 2px; background: #8a8a8a;
}
.current::after { left: 11px; width: 16px; background: #0877d6; }
.badge {
  position: absolute; left: 20px; top: 2px; width: 16px; height: 16px; border-radius: 50%;
  background: #ef6c00; border: 1px solid #a76834; color: #fff; font: 10px/14px Roboto, sans-serif; text-align: center;
}
.tray { display: flex; align-items: center; margin-left: auto; padding-right: 19px; }
.tray svg { fill: none; stroke: #1b1b1b; stroke-width: 1.2; }
.chev { width: 10px; height: 6px; margin-right: 19px; }
.wifi { width: 16px; height: 12px; margin-right: 8px; }
.vol { width: 16px; height: 12px; margin-right: 8px; }
.bat { width: 17px; height: 14px; margin-right: 15px; }
.clock { width: 63px; display: flex; flex-direction: column; align-items: flex-end; font-size: 11.5px; line-height: 16px; color: #1b1b1b; }
.clock span { white-space: nowrap; }
.dt { letter-spacing: .15px; }
```
